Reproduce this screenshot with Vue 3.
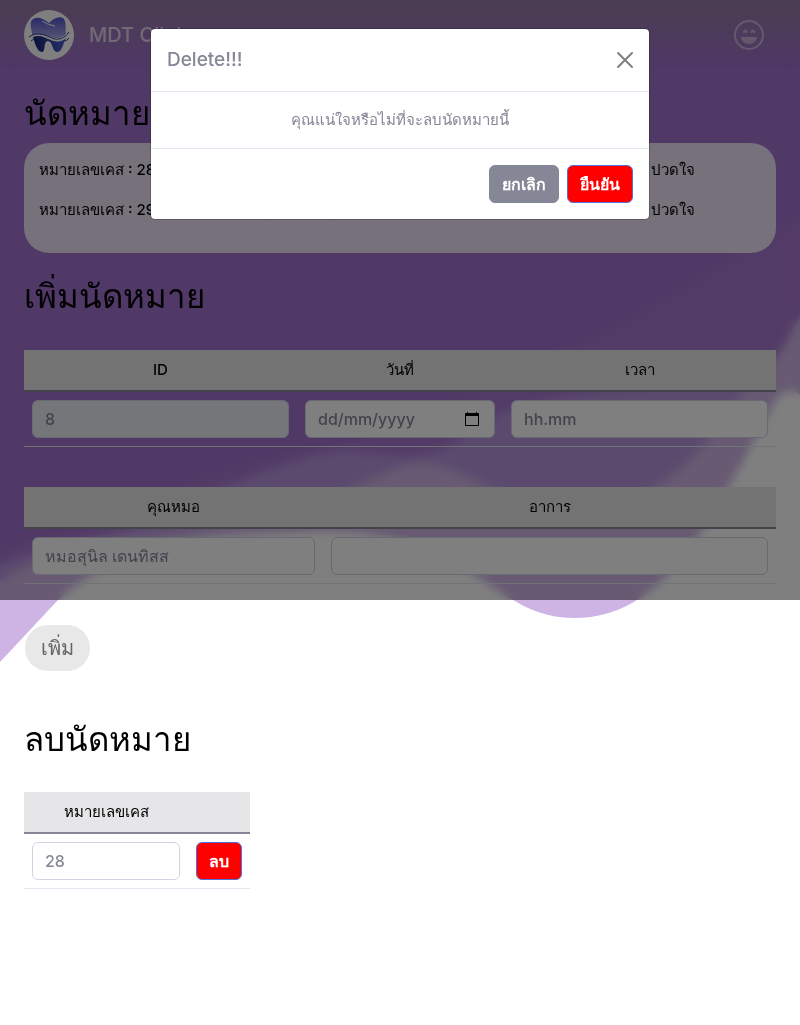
<script setup>
import { ref } from 'vue'

const cases = [
  { id: 28, doctor: 'คุณหมอ : สุนิล', symptom: 'ปวดใจ' },
  { id: 29, doctor: 'คุณหมอ : สุนิล', symptom: 'ปวดใจ' },
]
const form = ref({ id: '8', date: '', time: '', doctor: '', symptom: '' })
const caseId = ref('28')
const open = ref(true)
</script>

<template>
  <div class="page">
    <svg class="waves" viewBox="0 0 800 670" preserveAspectRatio="none" aria-hidden="true">
      <path fill="#ceb4e5" d="M0 0H800V395Q788 385 776 400C755 435 735 482 695 540C660 590 625 618 574 618C515 618 490 575 430 550C390 534 350 530 310 532C220 535 130 535 58 600L0 662Z" />
      <path fill="#b694dc" d="M0 0H800V318C775 345 755 380 735 402C700 460 640 512 575 512C510 512 465 463 423 463C390 463 370 484 330 496C260 522 200 528 120 538C65 546 30 560 0 582Z" />
      <path fill="#a676ce" d="M0 0H800V312C780 355 775 380 700 386C590 388 520 398 480 425C440 462 400 456 350 450C300 452 210 492 150 522C90 540 40 545 0 565Z" />
      <path fill="#a070ce" d="M0 0H800V215C730 255 620 325 550 352C430 405 390 440 330 444C250 450 170 485 120 515C70 532 30 535 0 545Z" />
    </svg>
    <div class="haze"></div>

    <header class="navbar">
      <a class="brand" href="#">
        <svg class="logo" viewBox="0 0 50 50" aria-hidden="true">
          <defs>
            <linearGradient id="crown" x1="0" y1="0" x2="0" y2="1">
              <stop offset="0" stop-color="#5252cf" />
              <stop offset="1" stop-color="#a9a9e8" />
            </linearGradient>
            <linearGradient id="root" x1="0" y1="0" x2="1" y2="0">
              <stop offset="0" stop-color="#102070" />
              <stop offset="1" stop-color="#5060d8" />
            </linearGradient>
          </defs>
          <circle cx="25" cy="25" r="25" fill="#fff" />
          <path fill="url(#crown)" d="M8 25C8 19 5 14 8 10C12 6 19 8 25 13C29 9 34 6 39 8C43 12 41 18 42 24C38 28 33 29 27 27C20 24 14 24 8 25Z" />
          <path fill="url(#root)" d="M9 27C17 24 23 29 30 31C35 32 39 31 42 28C39 34 38 42 33 42C28 42 29 31 24 31C19 31 22 42 18 42C13 42 11 33 9 27Z" />
          <path fill="none" stroke="#fff" stroke-width="1" d="M6 27C14 22 21 27 28 30C35 32 40 30 44 25M18 11Q24 15 31 16" />
          <path fill="none" stroke="#3a3a9d" stroke-width="1" d="M5 27C13 21 21 25 28 28C34 31 41 28 45 22M7 31Q12 26 18 27M40 31Q43 31 45 28" />
        </svg>
        <span>MDT Clinic</span>
      </a>
      <button class="profile" type="button" aria-label="Profile">
        <svg viewBox="0 0 30 30" aria-hidden="true">
          <circle cx="15" cy="15" r="14" fill="none" stroke="currentColor" stroke-width="2" />
          <path fill="currentColor" d="M7 17H23C23 21 19 24 15 24C11 24 7 21 7 17Z" />
          <path fill="none" stroke="currentColor" stroke-width="2" d="M10 13V12Q11 9 12.500 12V13M17.500 13V12Q19 9 20.500 12V13" />
        </svg>
      </button>
    </header>

    <main class="content">
      <h1>นัดหมายที่มี</h1>
      <section class="card">
        <div v-for="c in cases" :key="c.id" class="case">
          <span>หมายเลขเคส : {{ c.id }}</span>
          <span>{{ c.doctor }}</span>
          <span>{{ c.symptom }}</span>
        </div>
      </section>

      <h1>เพิ่มนัดหมาย</h1>
      <form @submit.prevent>
        <table class="grid schedule">
          <thead>
            <tr>
              <th id="h-id" class="side">ID</th>
              <th id="h-date">วันที่</th>
              <th id="h-time" class="side">เวลา</th>
            </tr>
          </thead>
          <tbody>
            <tr>
              <td><input v-model="form.id" class="control locked" aria-labelledby="h-id" readonly /></td>
              <td>
                <div class="control date">
                  <input v-model="form.date" aria-labelledby="h-date" placeholder="dd/mm/yyyy" />
                  <button type="button" aria-label="Calendar">
                    <svg viewBox="0 0 14 14" aria-hidden="true">
                      <path fill="#000" fill-rule="evenodd" d="M2 0H3V1H11V0H12V1H13Q14 1 14 2V13Q14 14 13 14H1Q0 14 0 13V2Q0 1 1 1H2ZM1 4V13H13V4Z" />
                    </svg>
                  </button>
                </div>
              </td>
              <td><input v-model="form.time" class="control" aria-labelledby="h-time" placeholder="hh.mm" /></td>
            </tr>
          </tbody>
        </table>

        <table class="grid detail">
          <thead>
            <tr>
              <th id="h-doctor" class="doctor">คุณหมอ</th>
              <th id="h-symptom">อาการ</th>
            </tr>
          </thead>
          <tbody>
            <tr>
              <td><input v-model="form.doctor" class="control" aria-labelledby="h-doctor" placeholder="หมอสุนิล เดนทิสส" /></td>
              <td><input v-model="form.symptom" class="control" aria-labelledby="h-symptom" /></td>
            </tr>
          </tbody>
        </table>
        <button class="add" type="submit">เพิ่ม</button>
      </form>

      <h1 class="remove-title">ลบนัดหมาย</h1>
      <table class="grid remove">
        <thead>
          <tr>
            <th id="h-case">หมายเลขเคส</th>
            <th class="action"></th>
          </tr>
        </thead>
        <tbody>
          <tr>
            <td><input v-model="caseId" class="control" aria-labelledby="h-case" /></td>
            <td><button class="btn danger" type="button" @click="open = true">ลบ</button></td>
          </tr>
        </tbody>
      </table>
    </main>

    <template v-if="open">
      <div class="backdrop"></div>
      <div class="modal" role="dialog" aria-labelledby="modal-title">
        <div class="modal-header">
          <h2 id="modal-title">Delete!!!</h2>
          <button class="close" type="button" aria-label="Close" @click="open = false">
            <svg viewBox="0 0 16 16" aria-hidden="true">
              <path d="M1 1L15 15M15 1L1 15" fill="none" stroke="#808080" stroke-width="2" stroke-linecap="round" />
            </svg>
          </button>
        </div>
        <p class="modal-body">คุณแน่ใจหรือไม่ที่จะลบนัดหมายนี้</p>
        <div class="modal-footer">
          <button class="btn muted" type="button" @click="open = false">ยกเลิก</button>
          <button class="btn danger" type="button" @click="open = false">ยืนยัน</button>
        </div>
      </div>
    </template>
  </div>
</template>

<style>
body {
  margin: 0;
  background: #fff;
}
</style>

<style scoped>
* {
  box-sizing: border-box;
}
.page {
  position: relative;
  isolation: isolate;
  padding-bottom: 48px;
  color: #000;
  font-family: Inter, "Noto Sans", "Open Sans", sans-serif;
  font-size: 15px;
  font-weight: 500;
  line-height: 24px;
}
.waves {
  position: absolute;
  z-index: -2;
  top: 0;
  left: 0;
  width: 100%;
  height: 670px;
}
.haze {
  position: absolute;
  z-index: -1;
  top: 0;
  left: 0;
  width: 100%;
  height: 600px;
  backdrop-filter: blur(5px);
}
button,
input {
  font: inherit;
  font-size: 16px;
}
.navbar {
  display: flex;
  align-items: center;
  justify-content: space-between;
  height: 70px;
  padding: 0 36px 0 24px;
  background: linear-gradient(rgba(144, 128, 144, 0.7), rgba(144, 128, 144, 0));
}
.brand {
  display: flex;
  align-items: center;
  gap: 15px;
  color: rgba(255, 255, 255, 0.7);
  font-size: 20px;
  text-decoration: none;
}
.logo {
  display: block;
  width: 50px;
  height: 50px;
}
.profile {
  width: 30px;
  height: 30px;
  padding: 0;
  border: 0;
  background: none;
  color: rgba(255, 255, 255, 0.45);
}
.profile svg {
  display: block;
  width: 30px;
  height: 30px;
}
.content {
  padding: 22px 24px 0;
}
h1 {
  margin: 0;
  font-size: 33px;
  font-weight: 500;
  line-height: 43px;
}
.card {
  display: grid;
  gap: 16px;
  margin: 8px 0 22px;
  padding: 15px 15px 31px;
  border-radius: 25px;
  background: rgba(255, 255, 255, 0.8);
}
.case {
  display: grid;
  grid-template-columns: 4fr 7fr 110px;
}
.case span {
  white-space: nowrap;
}
.grid {
  width: 100%;
  border-collapse: separate;
  border-spacing: 0;
  table-layout: fixed;
}
.schedule {
  margin: 32px 0 40px;
}
.detail {
  margin-bottom: 40px;
}
th {
  height: 42px;
  padding: 8px;
  border-bottom: 2px solid #858796;
  background: #e6e6e8;
  font-weight: 500;
}
td {
  padding: 8px;
  border-bottom: 1px solid #e3e6f0;
}
.side {
  width: 273px;
}
.doctor {
  width: 299px;
}
.control {
  display: block;
  width: 100%;
  height: 38px;
  padding: 6px 12px;
  border: 1px solid #d1d3e2;
  border-radius: 6px;
  outline: 0;
  background: #fff;
  color: #858796;
}
.locked {
  background: #eaecf4;
}
::placeholder {
  color: #858796;
  opacity: 1;
}
.date {
  display: flex;
  align-items: center;
  justify-content: space-between;
  padding-right: 15px;
}
.date input {
  flex: 1;
  min-width: 0;
  padding: 0;
  border: 0;
  outline: 0;
  background: none;
  color: #858796;
}
.date button {
  padding: 0;
  border: 0;
  background: none;
}
.date svg {
  display: block;
  width: 14px;
  height: 14px;
}
.add {
  display: block;
  height: 48px;
  padding: 0 16px;
  border: 1px solid #fff;
  border-radius: 24px;
  background: #e8e8e8;
  color: #666;
  font-size: 20px;
}
.remove-title {
  margin-top: 46px;
}
.remove {
  width: 226px;
  margin-top: 31px;
}
.action {
  width: 62px;
}
.btn {
  height: 38px;
  padding: 0 12px;
  border: 1px solid transparent;
  border-radius: 6px;
  color: #fff;
  font-weight: 600;
  white-space: nowrap;
}
.danger {
  border-color: #4e73df;
  background: #f00;
}
.remove .btn {
  width: 100%;
}
.muted {
  border-color: #858796;
  background: #858796;
}
.backdrop {
  position: absolute;
  top: 0;
  left: 0;
  width: 100%;
  height: 600px;
  background: rgba(0, 0, 0, 0.5);
}
.modal {
  position: absolute;
  top: 28px;
  left: 0;
  right: 0;
  max-width: 500px;
  margin: 0 auto;
  border: 1px solid rgba(0, 0, 0, 0.2);
  border-radius: 5px;
  background: #fff;
  background-clip: padding-box;
  color: #858796;
}
.modal-header {
  display: flex;
  align-items: center;
  justify-content: space-between;
  padding: 16px;
  border-bottom: 1px solid #e3e6f0;
}
.modal-header h2 {
  margin: 0;
  font-size: 19px;
  font-weight: 500;
  line-height: 30px;
}
.close {
  padding: 0;
  border: 0;
  background: none;
}
.close svg {
  display: block;
  width: 16px;
  height: 16px;
  overflow: visible;
}
.modal-body {
  margin: 0;
  padding: 16px;
  text-align: center;
}
.modal-footer {
  display: flex;
  justify-content: flex-end;
  gap: 8px;
  padding: 16px;
  border-top: 1px solid #e3e6f0;
}
</style>
